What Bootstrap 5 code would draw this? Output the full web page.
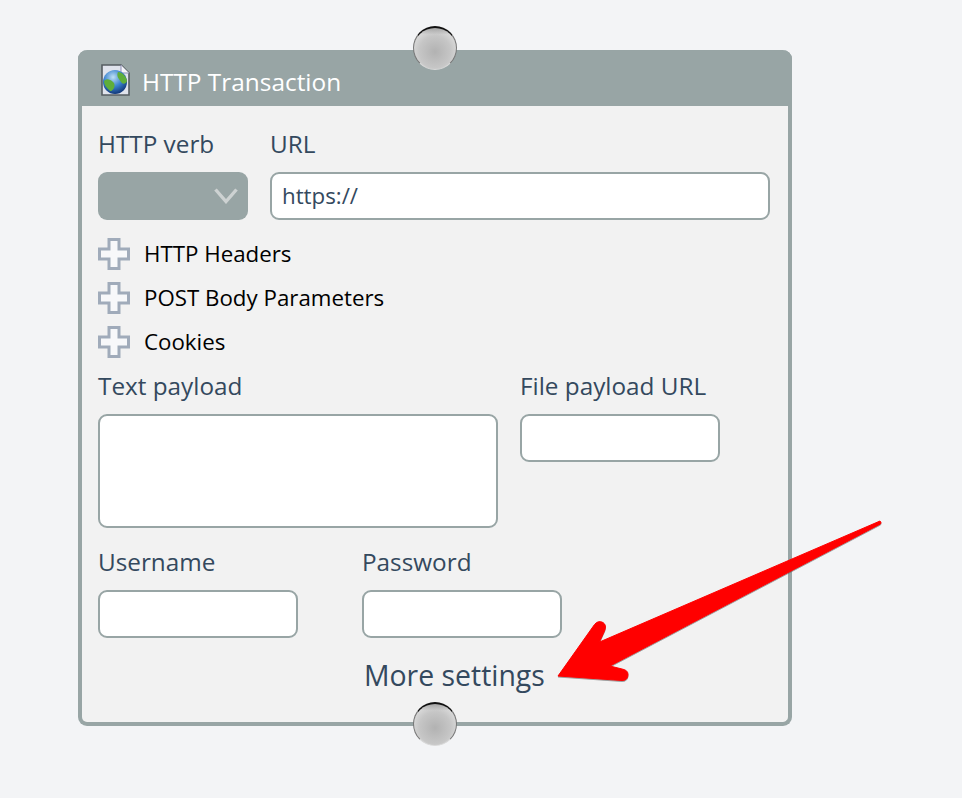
<!DOCTYPE html>
<html lang="en">
<head>
  <meta charset="UTF-8">
  <title>HTTP Transaction</title>
  <link href="https://cdn.jsdelivr.net/npm/bootstrap@5.3.0/dist/css/bootstrap.min.css" rel="stylesheet">
  <style>
    body { background: #f3f4f6; font-family: "Open Sans", "Liberation Sans", sans-serif; font-size: 22px; height: 798px; overflow: hidden; }
    .page-wrap { padding: 50px 0 0 78px; width: 962px; }
    .node-box { width: 714px; height: 676px; background: #f2f2f2; border: 4px solid #98a5a5; border-top: 0; border-radius: 9px; }
    .node-head { height: 56px; margin: 0 -4px; background: #98a5a5; border-radius: 9px 9px 0 0; color: #fff; font-size: 24.4px; padding: 3px 0 0 23px; gap: 12px; }
    .node-head span { position: relative; top: 3px; }
    .node-body { padding: 23px 16px 0; }
    .fld-label { color: #34495e; font-size: 24.3px; line-height: 30px; margin-bottom: 13px; display: block; }
    .fld-input { display: block; height: 48px; background: #fff; border: 2px solid #98a5a5; border-radius: 9px; padding: 0 10px; font-size: 22.3px; line-height: 44px; color: #34495e; }
    .verb-select { width: 150px; height: 48px; background: #98a5a5; border-radius: 9px; padding-right: 10px; }
    .w-url { width: 500px; }
    .w-200 { width: 200px; }
    .w-text { width: 400px; height: 114px; }
    .col-verb { margin-right: 22px; }
    .text-col { margin-right: 22px; }
    .user-col { width: 264px; }
    .tree-rows { margin-top: 12px; }
    .tree-row { height: 44px; color: #000; gap: 14px; font-size: 22.3px; }
    .payload-row { margin-top: 7px; }
    .auth-row { margin-top: 19px; }
    .more-link { color: #34495e; font-size: 28.4px; line-height: 36px; margin: 19px 0 0 266px; }
    .port { position: absolute; width: 44px; height: 44px; left: 413px; border-radius: 50%; border: 1px solid #777; border-top: 2px solid #111; border-bottom-color: #d8d8d8; background: linear-gradient(180deg, rgba(120,120,120,.55) 0, rgba(190,190,190,0) 16%), radial-gradient(circle at 50% 58%, #b2b2b2 0, #c6c6c6 50%, #efefef 100%); }
    .port-top { top: 26px; }
    .port-bottom { top: 702px; }
    .red-arrow { position: absolute; left: 0; top: 0; filter: drop-shadow(0 1px 0.5px rgba(90,90,90,.55)); }
  </style>
</head>
<body>
<div class="page-wrap">
  <div class="node-box">
    <div class="node-head d-flex align-items-center">
      <svg width="29" height="32" viewBox="0 0 29 32">
        <defs>
          <radialGradient id="globe" cx="42%" cy="30%" r="70%"><stop offset="0" stop-color="#bfe0f5"/><stop offset=".55" stop-color="#3a83cf"/><stop offset="1" stop-color="#12397a"/></radialGradient>
        </defs>
        <path d="M1 1H20L28 9V31H1Z" fill="#dfe3ec" stroke="#555d62" stroke-width="1.6"/>
        <path d="M20 1V9H28" fill="#f5f5fa" stroke="#8d8fb5"/>
        <circle cx="14" cy="18" r="12" fill="url(#globe)"/>
        <path d="M3 17C7 13 11 17 13 19C15 23 11 28 9 27C6 24 3 21 3 17Z M17 8C21 8 26 13 26 17C25 20 22 21 20 18C18 15 15 12 17 8Z" fill="#5fae3a"/>
      </svg>
      <span>HTTP Transaction</span>
    </div>
    <div class="node-body">
      <div class="d-flex">
        <div class="col-verb">
          <label class="fld-label">HTTP verb</label>
          <div class="verb-select d-flex align-items-center justify-content-end">
            <svg width="24" height="16" viewBox="0 0 24 16"><path d="M1.5 1.5L12 13.5L22.5 1.5" fill="none" stroke="#cdd2d2" stroke-width="3.4"/></svg>
          </div>
        </div>
        <div>
          <label class="fld-label">URL</label>
          <div class="fld-input w-url">https://</div>
        </div>
      </div>
      <div class="tree-rows">
        <div class="tree-row d-flex align-items-center">
          <svg width="32" height="32" viewBox="0 0 32 32"><path d="M11 1.5H21V11H30.5V21H21V30.5H11V21H1.5V11H11Z" fill="#f7f8fa" stroke="#a0abba" stroke-width="3"/></svg>
          <span>HTTP Headers</span>
        </div>
        <div class="tree-row d-flex align-items-center">
          <svg width="32" height="32" viewBox="0 0 32 32"><path d="M11 1.5H21V11H30.5V21H21V30.5H11V21H1.5V11H11Z" fill="#f7f8fa" stroke="#a0abba" stroke-width="3"/></svg>
          <span>POST Body Parameters</span>
        </div>
        <div class="tree-row d-flex align-items-center">
          <svg width="32" height="32" viewBox="0 0 32 32"><path d="M11 1.5H21V11H30.5V21H21V30.5H11V21H1.5V11H11Z" fill="#f7f8fa" stroke="#a0abba" stroke-width="3"/></svg>
          <span>Cookies</span>
        </div>
      </div>
      <div class="d-flex payload-row">
        <div class="text-col">
          <label class="fld-label">Text payload</label>
          <div class="fld-input w-text"></div>
        </div>
        <div>
          <label class="fld-label">File payload URL</label>
          <div class="fld-input w-200"></div>
        </div>
      </div>
      <div class="d-flex auth-row">
        <div class="user-col">
          <label class="fld-label">Username</label>
          <div class="fld-input w-200"></div>
        </div>
        <div>
          <label class="fld-label">Password</label>
          <div class="fld-input w-200"></div>
        </div>
      </div>
      <div class="more-link">More settings</div>
    </div>
  </div>
</div>
<div class="port port-top"></div>
<div class="port port-bottom"></div>
<svg class="red-arrow" width="962" height="798" viewBox="0 0 962 798">
  <path d="M881 522.5L880 521L599.5 642L604.5 631Q607 625 603 622.5Q598 620 594.5 624.5L558 676L622 680.5Q628 680.5 628 674.5Q628 670 622 669L610 666L880.5 524Z" fill="#f00" stroke="#f00" stroke-width="1" stroke-linejoin="round"/>
</svg>
<script src="https://cdn.jsdelivr.net/npm/bootstrap@5.3.0/dist/js/bootstrap.bundle.min.js"></script>
</body>
</html>
